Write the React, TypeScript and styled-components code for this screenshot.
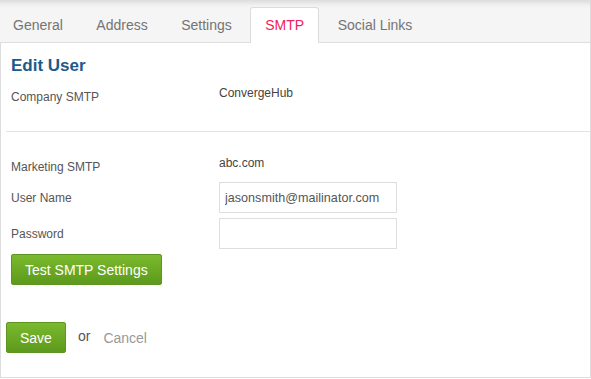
import React from "react";
import styled, { createGlobalStyle } from "styled-components";

const Global = createGlobalStyle`
  html, body { margin: 0; padding: 0; background: #fff; }
  body { font-family: "Liberation Sans", Arial, sans-serif; }
  * { box-sizing: border-box; }
`;

const Panel = styled.div`
  width: 591px;
  height: 378px;
  border-left: 1px solid #dcdcdc;
  border-right: 1px solid #dcdcdc;
  border-bottom: 1px solid #dcdcdc;
  background: #fff;
  display: flex;
  flex-direction: column;
`;

const TabBar = styled.div`
  height: 43px;
  flex: none;
  display: flex;
  align-items: flex-end;
  padding-left: 0;
  background: linear-gradient(#dcdcdc 0px, #f0f0f0 5px, #f5f5f5 8px, #f5f5f5 100%);
  border-bottom: 1px solid #dedede;
  margin-left: -3px;
`;

const Tab = styled.div<{ $active?: boolean }>`
  height: 36px;
  margin-bottom: -1px;
  margin-right: 3.5px;
  padding: 0 14px;
  display: flex;
  align-items: center;
  font-size: 14px;
  color: ${(p) => (p.$active ? "#f2215a" : "#747474")};
  background: ${(p) => (p.$active ? "#fff" : "transparent")};
  border: 1px solid ${(p) => (p.$active ? "#dcdcdc" : "transparent")};
  border-bottom: none;
  border-radius: 3px 3px 0 0;
  padding-bottom: 1px;
`;

const Content = styled.div`
  padding-left: 5px;
  display: flex;
  flex-direction: column;
`;

const Section = styled.div`
  padding-left: 5px;
  display: flex;
  flex-direction: column;
`;

const Heading = styled.h2`
  margin: 13px 0 0;
  font-size: 17px;
  line-height: 20px;
  font-weight: bold;
  color: #1b5a8c;
`;

const Row = styled.div<{ $top: number; $center?: boolean }>`
  display: grid;
  grid-template-columns: 208px 1fr;
  align-items: ${(p) => (p.$center ? "center" : "start")};
  margin-top: ${(p) => p.$top}px;
`;

const Label = styled.div<{ $offset?: boolean }>`
  font-size: 12px;
  line-height: 16px;
  color: #555;
  padding-top: ${(p) => (p.$offset ? "4px" : "0")};
`;

const Value = styled.div`
  font-size: 12px;
  line-height: 16px;
  color: #444;
`;

const Divider = styled.hr`
  margin: 26px 0 0;
  border: none;
  border-top: 1px solid #e3e3e3;
  height: 0;
`;

const Input = styled.input`
  width: 178px;
  height: 31px;
  border: 1px solid #dedede;
  padding: 0 5px;
  font-family: "Liberation Sans", Arial, sans-serif;
  font-size: 12.6px;
  color: #555;
  outline: none;
  background: #fff;
`;

const GreenButton = styled.button<{ $pad: number }>`
  height: 31px;
  padding: 0 ${(p) => p.$pad}px;
  font-family: "Liberation Sans", Arial, sans-serif;
  font-size: 14px;
  color: #fff;
  background: linear-gradient(#7bb92e, #5d9a1c);
  border: 1px solid #5e9420;
  border-radius: 2px;
  cursor: pointer;
`;

const TestWrap = styled.div`
  margin-top: 5px;
  display: flex;
`;

const Actions = styled.div`
  margin-top: 37px;
  display: flex;
  align-items: center;
  font-size: 14px;
`;

const Or = styled.span`
  margin-left: 12px;
  color: #555;
  position: relative;
  top: -2px;
`;

const Cancel = styled.a`
  margin-left: 13px;
  color: #999;
  text-decoration: none;
  cursor: pointer;
`;

const tabs = ["General", "Address", "Settings", "SMTP", "Social Links"];

export default function App() {
  return (
    <>
      <Global />
      <Panel>
        <TabBar>
          {tabs.map((t) => (
            <Tab key={t} $active={t === "SMTP"}>
              {t}
            </Tab>
          ))}
        </TabBar>
        <Content>
          <Section>
            <Heading>Edit User</Heading>
            <Row $top={9}>
              <Label $offset>Company SMTP</Label>
              <Value>ConvergeHub</Value>
            </Row>
          </Section>
          <Divider />
          <Section>
            <Row $top={23}>
              <Label $offset>Marketing SMTP</Label>
              <Value>abc.com</Value>
            </Row>
            <Row $top={7} $center>
              <Label>User Name</Label>
              <Input defaultValue="jasonsmith@mailinator.com" />
            </Row>
            <Row $top={5} $center>
              <Label>Password</Label>
              <Input type="password" />
            </Row>
            <TestWrap>
              <GreenButton $pad={13}>Test SMTP Settings</GreenButton>
            </TestWrap>
          </Section>
          <Actions>
            <GreenButton $pad={13}>Save</GreenButton>
            <Or>or</Or>
            <Cancel>Cancel</Cancel>
          </Actions>
        </Content>
      </Panel>
    </>
  );
}
